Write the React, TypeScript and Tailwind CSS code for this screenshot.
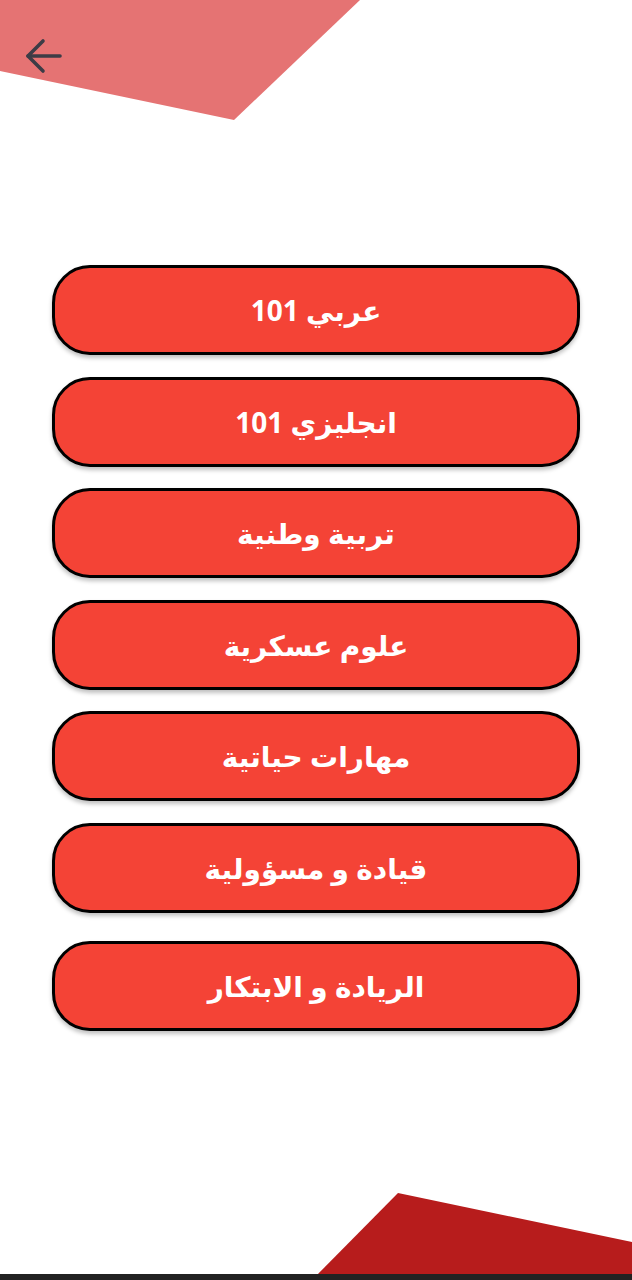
const courses = [
  "عربي 101",
  "انجليزي 101",
  "تربية وطنية",
  "علوم عسكرية",
  "مهارات حياتية",
  "قيادة و مسؤولية",
  "الريادة و الابتكار",
];

export default function App() {
  return (
    <div className="relative w-full h-[1280px] bg-white overflow-hidden font-['Noto_Sans','DejaVu_Sans',sans-serif]">
      {/* top decoration */}
      <svg className="absolute top-0 left-0" width="632" height="130" viewBox="0 0 632 130">
        <polygon points="0,0 360,0 234,120 0,71" fill="#e57373" />
      </svg>
      {/* bottom decoration */}
      <svg className="absolute bottom-0 left-0" width="632" height="100" viewBox="0 0 632 100">
        <polygon points="398,13 632,62 632,100 312,100" fill="#b71c1c" />
        <rect x="0" y="94" width="632" height="6" fill="#222222" />
      </svg>

      <button className="absolute top-[36px] left-[22px] text-[#3c3c46]">
        <svg width="42" height="42" viewBox="0 0 42 42" fill="none" stroke="currentColor" strokeWidth="3.6" strokeLinecap="round" strokeLinejoin="round">
          <path d="M38 20 H6" />
          <path d="M21 5 L6 20 L21 35" />
        </svg>
      </button>

      <div className="relative flex flex-col items-center pt-[265px]">
        {courses.map((c, i) => (
          <button
            key={c}
            dir="rtl"
            className={`w-[528px] h-[90px] rounded-[38px] border-[3px] border-black bg-[#f44336] text-white text-[28px] font-bold shadow-[0_3px_4px_rgba(0,0,0,0.25)] ${
              i === 6 ? "mt-[28px]" : i === 0 ? "" : "mt-[21.6px]"
            }`}
          >
            {c}
          </button>
        ))}
      </div>
    </div>
  );
}
